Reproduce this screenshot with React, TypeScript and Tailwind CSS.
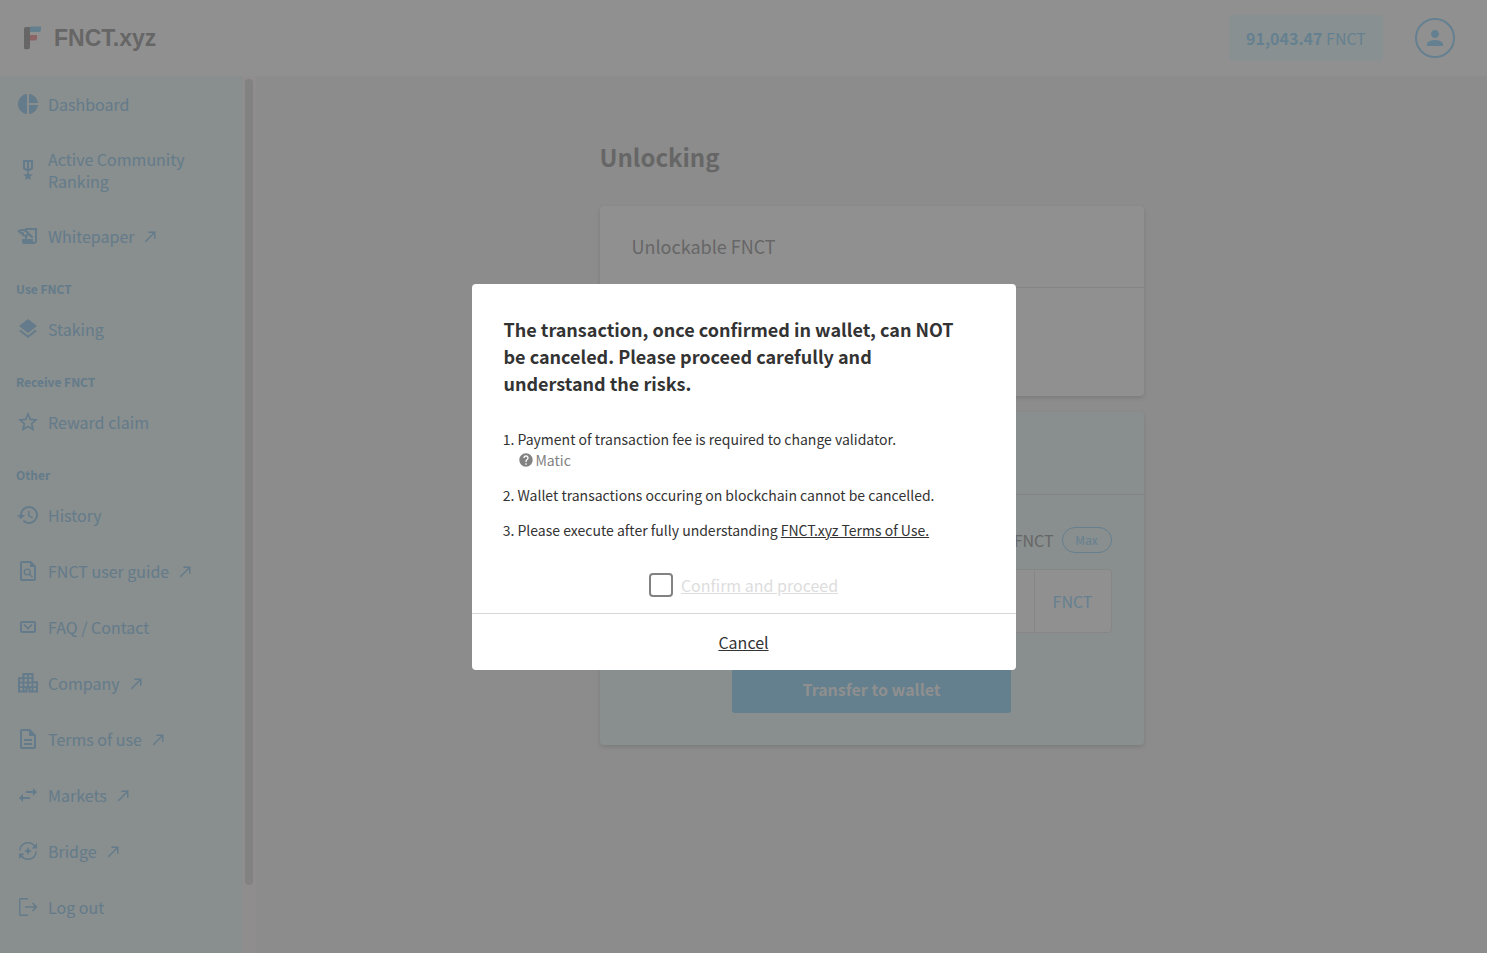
import type { ReactNode } from "react";
import {
  MdCallMade,
  MdHelp,
  MdHistory,
  MdLayers,
  MdOutlineDescription,
  MdOutlineHistoryEdu,
  MdOutlineMilitaryTech,
  MdPerson,
  MdPieChart,
  MdStarBorder,
  MdSwapHoriz,
} from "react-icons/md";

const FileSearchIcon = () => (
  <svg viewBox="0 0 24 24" className="size-6" fill="none" stroke="currentColor" strokeWidth="2">
    <path d="M14.500 3H6a1 1 0 0 0-1 1v16a1 1 0 0 0 1 1h12a1 1 0 0 0 1-1V7.500z" />
    <path d="M14 3v5h5z" fill="currentColor" stroke="none" />
    <circle cx="11.200" cy="13" r="2.900" strokeWidth="1.4" />
    <path d="M13.200 15l3.300 3.200" strokeWidth="1.4" />
  </svg>
);

const MailIcon = () => (
  <svg viewBox="0 0 24 24" className="size-6" fill="none" stroke="currentColor" strokeWidth="2">
    <rect x="5" y="7" width="14" height="10" rx="1" />
    <path d="M8 9.500l4 4 4-4" strokeWidth="1.6" />
  </svg>
);

const BuildingIcon = () => (
  <svg viewBox="0 0 24 24" className="size-6" fill="none" stroke="currentColor" strokeWidth="2">
    <path d="M7.500 7.200V3h9v8.200H21v9.300h-7.500v-4h-3v4H3V7.200z" />
    <path d="M7.500 7v13.500M12 3v13.500M16.500 11v9.500M7.500 7.200h9M3 11.700h13.500M3 16.200h18" strokeWidth="1.800" />
  </svg>
);

const BridgeIcon = () => (
  <svg viewBox="0 0 24 24" className="size-6" fill="none" stroke="currentColor" strokeWidth="1.500">
    <path d="M3.800 11.500a8.300 8.300 0 0 1 15-4.300M20.200 12.500a8.300 8.300 0 0 1-15 4.300" />
    <path d="M21 4v5.500h-5.500zM3 20v-5.500h5.500z" fill="currentColor" stroke="none" />
    <path d="M12 8l1.200 2.800L16 12l-2.800 1.200L12 16l-1.200-2.800L8 12l2.800-1.200z" fill="currentColor" stroke="none" />
  </svg>
);

const LogoutIcon = () => (
  <svg viewBox="0 0 24 24" className="size-6" fill="none" stroke="currentColor" strokeWidth="1.400">
    <path d="M12 3.700H4.500a.8.8 0 0 0-.8.8v15a.8.8 0 0 0 .8.8H12" />
    <path d="M9 12h11.500M16.500 8l4 4-4 4" />
  </svg>
);

const Logo = () => (
  <svg viewBox="0 0 18 24" className="h-6 w-[18px]">
    <path d="M6 .5h11V4a2 2 0 0 1-2 2H6z" fill="#64808f" />
    <path d="M6 9h7v3.500a2 2 0 0 1-2 2H6z" fill="#8d6465" />
    <path d="M2 1h4v20a2.200 2.200 0 0 1-2.200 2.200H1.500A1.500 1.500 0 0 1 0 21.700V3a2 2 0 0 1 2-2z" fill="#666" />
  </svg>
);

type Item = { label: string; icon: ReactNode; external?: boolean };

const sections: { title?: string; items: Item[] }[] = [
  {
    items: [
      { label: "Dashboard", icon: <MdPieChart /> },
      { label: "Active Community Ranking", icon: <MdOutlineMilitaryTech /> },
      { label: "Whitepaper", icon: <MdOutlineHistoryEdu />, external: true },
    ],
  },
  { title: "Use FNCT", items: [{ label: "Staking", icon: <MdLayers /> }] },
  { title: "Receive FNCT", items: [{ label: "Reward claim", icon: <MdStarBorder /> }] },
  {
    title: "Other",
    items: [
      { label: "History", icon: <MdHistory /> },
      { label: "FNCT user guide", icon: <FileSearchIcon />, external: true },
      { label: "FAQ / Contact", icon: <MailIcon /> },
      { label: "Company", icon: <BuildingIcon />, external: true },
      { label: "Terms of use", icon: <MdOutlineDescription />, external: true },
      { label: "Markets", icon: <MdSwapHoriz />, external: true },
      { label: "Bridge", icon: <BridgeIcon />, external: true },
      { label: "Log out", icon: <LogoutIcon /> },
    ],
  },
];

function Header() {
  return (
    <header className="flex h-[76px] shrink-0 items-center justify-between bg-[#909090] pr-8 pl-6">
      <a href="#" className="flex items-center gap-3 font-['Liberation_Sans',sans-serif] text-[23px] font-bold text-[#666]">
        <Logo />
        FNCT.xyz
      </a>
      <div className="flex items-center gap-8">
        <p className="min-w-[154px] rounded bg-[#889091] px-4 py-3 text-center text-base leading-[22px] text-[#658090]">
          <strong className="font-bold">91,043.47</strong> FNCT
        </p>
        <button
          type="button"
          aria-label="Account"
          className="flex size-10 items-center justify-center rounded-full border-2 border-[#658090] text-[24px] text-[#658090]"
        >
          <MdPerson />
        </button>
      </div>
    </header>
  );
}

function Sidebar() {
  return (
    <div className="flex w-64 shrink-0 overflow-hidden bg-[#8f8d8d]">
      <nav className="w-[242px] shrink-0 bg-[#898e8e] text-[#637b8a]">
        {sections.map((section, i) => (
          <section key={i}>
            {section.title && (
              <h2 className="px-4 pt-[14px] pb-[2px] text-xs leading-[21px] font-bold">{section.title}</h2>
            )}
            <ul>
              {section.items.map((item) => (
                <li key={item.label}>
                  <a href="#" className="flex min-h-14 items-center gap-2 py-4 pr-8 pl-4 text-base leading-[22px]">
                    <span className="shrink-0 text-[24px]">{item.icon}</span>
                    <span>{item.label}</span>
                    {item.external && <MdCallMade className="size-[17px] shrink-0" />}
                  </a>
                </li>
              ))}
            </ul>
          </section>
        ))}
      </nav>
      <div className="ml-[3px] flex w-2 flex-col pt-[3px] pb-[68px]">
        <div className="grow rounded-full bg-[#828282]" />
      </div>
    </div>
  );
}

function UnlockPanel() {
  return (
    <div className="mx-auto w-full max-w-[544px] pt-16 text-[#666]">
      <h1 className="text-2xl leading-[34px] font-bold">Unlocking</h1>
      <section className="mt-8 h-[190px] rounded bg-[#909090] shadow-[0_2px_4px_rgba(0,0,0,0.12)]">
        <h2 className="border-b border-[#848484] px-8 py-7 text-lg leading-[25px]">Unlockable FNCT</h2>
      </section>
      <section className="mt-4 rounded bg-[#898e8e] shadow-[0_2px_4px_rgba(0,0,0,0.12)]">
        <div className="h-[83px] border-b border-[#848485]" />
        <div className="p-8">
          <div className="flex items-center justify-end gap-2 text-base leading-[26px]">
            <span>FNCT</span>
            <button
              type="button"
              className="h-[26px] w-[50px] rounded-full border border-[#658090] text-xs leading-6 text-[#658090]"
            >
              Max
            </button>
          </div>
          <div className="mt-4 flex h-16 rounded-sm border border-[#868686] bg-[#909090]">
            <input aria-label="Amount" className="min-w-0 grow px-4 text-right text-base outline-none" />
            <span className="flex w-[77px] items-center justify-center border-l border-[#868686] text-base text-[#658090]">
              FNCT
            </span>
          </div>
          <button
            type="button"
            className="mx-auto mt-8 block h-12 w-[279px] rounded-[3px] bg-[#64808e] text-base font-bold text-[#8f8f8f]"
          >
            Transfer to wallet
          </button>
        </div>
      </section>
    </div>
  );
}

function ConfirmDialog() {
  return (
    <div className="fixed inset-0 flex items-center justify-center">
      <div
        role="dialog"
        aria-modal="true"
        aria-labelledby="dialog-title"
        className="w-full max-w-[544px] rounded bg-white text-[#333]"
      >
        <div className="px-8 pt-8 pb-4">
          <h2 id="dialog-title" className="text-lg leading-[27px] font-bold">
            The transaction, once confirmed in wallet, can NOT
            <br />
            be canceled. Please proceed carefully and
            <br />
            understand the risks.
          </h2>
          <ol className="mt-8 flex list-decimal flex-col gap-[14px] pl-[14px] text-sm leading-[21px]">
            <li>
              Payment of transaction fee is required to change validator.
              <span className="flex items-center gap-0.5 text-[#828282]">
                <MdHelp className="size-4" />
                Matic
              </span>
            </li>
            <li>Wallet transactions occuring on blockchain cannot be cancelled.</li>
            <li>
              Please execute after fully understanding{" "}
              <a href="#" className="underline">
                FNCT.xyz Terms of Use.
              </a>
            </li>
          </ol>
          <label className="mt-8 flex items-center justify-center gap-2 text-base leading-6 text-[#ddd] underline">
            <input type="checkbox" className="size-6 appearance-none rounded border-2 border-[#828282] bg-white" />
            Confirm and proceed
          </label>
        </div>
        <div className="flex justify-center border-t border-[#d8d8d8] py-4">
          <button type="button" className="text-base leading-6 underline">
            Cancel
          </button>
        </div>
      </div>
    </div>
  );
}

export default function App() {
  return (
    <div className="flex h-screen flex-col overflow-hidden bg-[#8c8c8c] font-['Noto_Sans_CJK_JP',sans-serif]">
      <Header />
      <div className="flex min-h-0 grow">
        <Sidebar />
        <main className="min-w-0 grow">
          <UnlockPanel />
        </main>
      </div>
      <ConfirmDialog />
    </div>
  );
}
